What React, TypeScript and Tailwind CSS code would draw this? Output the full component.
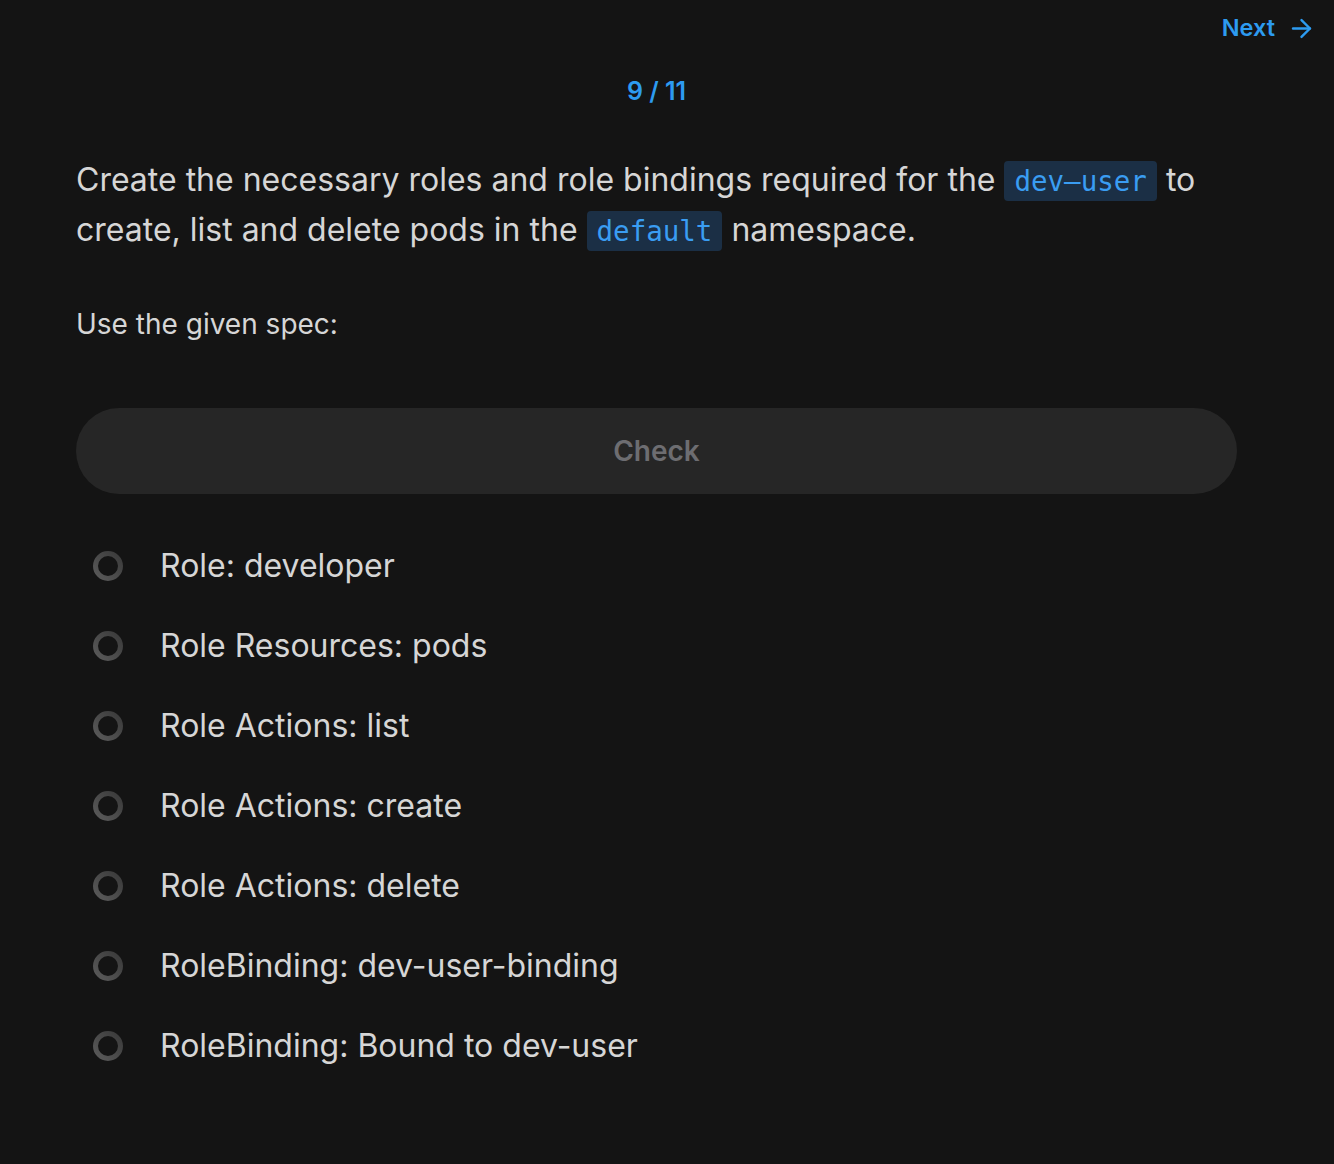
import { ArrowRight } from 'lucide-react';

const CHECKS = [
  'Role: developer',
  'Role Resources: pods',
  'Role Actions: list',
  'Role Actions: create',
  'Role Actions: delete',
  'RoleBinding: dev-user-binding',
  'RoleBinding: Bound to dev-user',
];

function Code({ children }: { children: string }) {
  return (
    <code className="inline-block rounded-[4px] bg-[#1b2f45] px-[10px] leading-[40px] text-[#3a9df2] font-['DejaVu_Sans_Mono',monospace] text-[27.5px] align-baseline">
      {children}
    </code>
  );
}

function Ring() {
  return (
    <svg width="32" height="32" viewBox="0 0 32 32" className="shrink-0">
      <defs>
        <linearGradient id="ring" x1="0" y1="1" x2="1" y2="0">
          <stop offset="0%" stopColor="#5a5a5a" />
          <stop offset="100%" stopColor="#3a3a3a" />
        </linearGradient>
      </defs>
      <circle cx="16" cy="16" r="12.5" fill="none" stroke="url(#ring)" strokeWidth="5" />
    </svg>
  );
}

export default function App() {
  return (
    <div className="min-h-[1164px] bg-[#141414] font-['Inter',sans-serif] text-[#d6d6d6]">
      {/* top bar */}
      <div className="flex justify-end pr-[18px] pt-[12px] h-[56px]">
        <button className="flex items-center gap-[12px] text-[#2d9bf0] text-[23.5px] font-semibold h-[32px]">
          Next
          <ArrowRight size={29} strokeWidth={2} />
        </button>
      </div>

      <div className="pl-[76px] pr-[97px]">
        <div className="text-center text-[#2d9bf0] text-[25px] font-semibold leading-[32px] mt-[19px]">
          9 / 11
        </div>

        <p className="mt-[48px] text-[32px] leading-[50px]">
          Create the necessary roles and role bindings required for the <Code>dev–user</Code> to
          create, list and delete pods in the <Code>default</Code> namespace.
        </p>

        <p className="mt-[49px] text-[28px] leading-[40px]">Use the given spec:</p>

        <button className="mt-[64px] w-full h-[86px] rounded-full bg-[#262626] text-[#6d6d71] text-[28px] font-semibold">
          Check
        </button>

        <ul className="mt-[32px] flex flex-col">
          {CHECKS.map((c) => (
            <li key={c} className="flex items-center h-[80px] pl-[16px]">
              <Ring />
              <span className="ml-[36px] text-[32px]">{c}</span>
            </li>
          ))}
        </ul>
      </div>
    </div>
  );
}
